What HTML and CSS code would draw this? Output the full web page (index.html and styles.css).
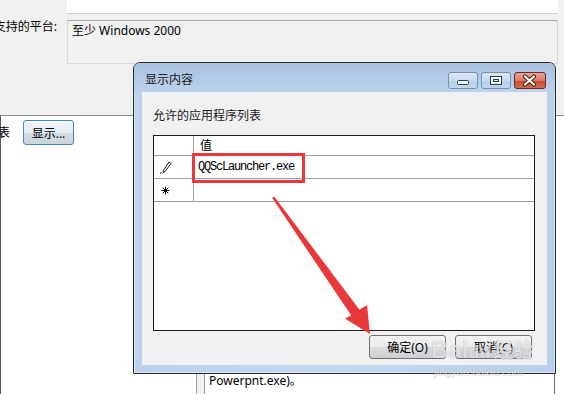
FILE: index.html
```html
<!DOCTYPE html>
<html lang="zh-CN">

<head>
    <meta charset="UTF-8">
    <meta name="viewport" content="width=device-width, initial-scale=1.0">
    <title>显示内容</title>
    <link rel="stylesheet" href="styles.css">
</head>

<body>
    <div class="props">
        <div class="field-top"></div>
        <div class="platform-row">
            <div class="prop-label">支持的平台:</div>
            <div class="platform-box">至少 Windows 2000</div>
        </div>
    </div>

    <div class="lower">
        <div class="pane-left">
            <div class="list-row">
                <span class="cut-label">表</span>
                <button class="btn-show">显示...</button>
            </div>
        </div>
        <div class="splitter"></div>
        <div class="pane-right">
            <p class="help-text">Powerpnt.exe)。</p>
        </div>
    </div>

    <div class="dialog">
        <div class="titlebar">
            <span class="title">显示内容</span>
            <div class="caption-btns">
                <span class="cap-btn">
                    <svg width="28" height="15" viewBox="0 0 28 15">
                        <rect x="8.5" y="7.5" width="11" height="4" rx="1" fill="#f4f8fc" stroke="#2a3d57"/>
                    </svg>
                </span>
                <span class="cap-btn">
                    <svg width="28" height="15" viewBox="0 0 28 15">
                        <rect x="8.5" y="3.5" width="11" height="8" fill="#f4f8fc" stroke="#2a3d57"/>
                        <rect x="11.5" y="6.5" width="5" height="2" fill="none" stroke="#2a3d57"/>
                    </svg>
                </span>
                <span class="cap-btn cap-close">
                    <svg width="30" height="15" viewBox="0 0 30 15">
                        <path d="M10 3.5 L19 11.5 M19 3.5 L10 11.5" stroke="#4a1c15" stroke-width="4.2" stroke-linecap="round"/>
                        <path d="M10 3.5 L19 11.5 M19 3.5 L10 11.5" stroke="#fff" stroke-width="2.2" stroke-linecap="round"/>
                    </svg>
                </span>
            </div>
        </div>

        <div class="client">
            <div class="list-title">允许的应用程序列表</div>
            <div class="grid">
                <div class="grid-row grid-head">
                    <div class="row-head"></div>
                    <div class="cell">值</div>
                </div>
                <div class="grid-row">
                    <div class="row-head">
                        <svg width="12" height="13" viewBox="0 0 12 13">
                            <path d="M9 1 L11 2.4 L5 10.6 L3.3 11.5 L3.4 9.4 Z" fill="none" stroke="#000" stroke-width="0.9"/>
                            <rect x="0" y="11.5" width="1" height="1" fill="#000"/>
                            <rect x="1.6" y="11.5" width="1" height="1" fill="#000"/>
                        </svg>
                    </div>
                    <div class="cell cell-mono">QQScLauncher.exe</div>
                </div>
                <div class="grid-row">
                    <div class="row-head">
                        <svg class="new-row" width="9" height="9" viewBox="0 0 9 9">
                            <path d="M4.5 0.5 V8.5 M0.5 4.5 H8.5 M1.7 1.7 L7.3 7.3 M7.3 1.7 L1.7 7.3" stroke="#000" stroke-width="1"/>
                        </svg>
                    </div>
                    <div class="cell"></div>
                </div>
            </div>
            <div class="dlg-buttons">
                <button class="btn">确定(O)</button>
                <button class="btn">取消(C)</button>
            </div>
        </div>
    </div>

    <!-- annotations on top of the screenshot -->
    <div class="highlight"></div>
    <svg class="arrow" width="564" height="394" viewBox="0 0 564 394">
        <polygon points="274.2,196.4 359.5,309.8 367,305 370,334 345,318.5 351.3,315.6 272.2,198" fill="#e8383a"/>
    </svg>
    <div class="watermark">
        <div class="wm-logo">Bai<span class="wm-du">du</span><span class="wm-cn">经验</span></div>
        <div class="wm-url">jingyan.baidu.com</div>
    </div>
</body>

</html>
```

FILE: styles.css
```css
body {
    margin: 0;
    width: 564px;
    height: 394px;
    overflow: hidden;
    position: relative;
    background: #f0f0f0;
    font-family: "Noto Sans", "Noto Sans CJK SC", sans-serif;
    font-size: 12px;
    color: #000;
}

/* policy property page behind the dialog */
.props {
    height: 115px;
}

.field-top {
    height: 13px;
    margin: 0 6px 0 67px;
    background: #fff;
    border-bottom: 1px solid #cfcfcf;
}

.platform-row {
    display: flex;
    margin: 6px 6px 0 0;
}

.prop-label {
    width: 67px;
    padding-right: 10px;
    box-sizing: border-box;
    display: flex;
    justify-content: flex-end;
    white-space: nowrap;
    line-height: 14px;
}

.platform-box {
    flex: 1;
    height: 44px;
    box-sizing: border-box;
    border: 1px solid #d9d9d9;
    border-top-color: #a9a9a9;
    padding: 3px 4px;
    line-height: 14px;
}

.lower {
    display: flex;
    height: 279px;
    box-sizing: border-box;
    background: #fff;
    border-top: 1px solid #8c8c8c;
    border-left: 1px solid #5a5a5a;
}

.pane-left {
    width: 195px;
}

.list-row {
    display: flex;
    align-items: center;
    padding-top: 4px;
}

.cut-label {
    margin-left: -3px;
    line-height: 14px;
}

.btn-show {
    margin-left: 13px;
    width: 51px;
    height: 25px;
    padding: 0;
    border: 1px solid #3f8ab8;
    border-radius: 3px;
    background: linear-gradient(#f2f5f8 0%, #e4eaef 50%, #d4dce3 51%, #cad3db 100%);
    font-family: inherit;
    font-size: 12px;
    color: #000;
}

.splitter {
    width: 7px;
    background: #f0f0f0;
    border-left: 1px solid #a0a0a0;
    border-right: 1px solid #a0a0a0;
}

.pane-right {
    flex: 1;
    margin-right: 9px;
    padding-left: 4px;
    border-right: 1px solid #6e6e6e;
}

.help-text {
    margin: 258px 0 0;
    line-height: 14px;
}

/* the "显示内容" window */
.dialog {
    position: absolute;
    left: 133px;
    top: 62px;
    width: 423px;
    height: 312px;
    box-sizing: border-box;
    display: flex;
    flex-direction: column;
    border: 1px solid #2b2b2b;
    border-radius: 7px 7px 0 0;
    background: linear-gradient(90deg, #bcd2ec, #c4d9f0 50%, #b9d0eb);
    box-shadow: inset 0 0 0 1px rgba(255, 255, 255, 0.45);
}

.titlebar {
    flex: none;
    height: 29px;
    box-sizing: border-box;
    padding: 9px 9px 0 11px;
    display: flex;
    justify-content: space-between;
    align-items: flex-start;
    border-radius: 6px 6px 0 0;
    background: linear-gradient(#a6c0de, #bdd3ec);
}

.title {
    line-height: 16px;
    color: #1a1a1a;
}

.caption-btns {
    display: flex;
    gap: 3px;
}

.cap-btn {
    display: flex;
    width: 30px;
    height: 17px;
    box-sizing: border-box;
    border: 1px solid #7890b0;
    border-radius: 3px;
    background: linear-gradient(#dce8f5 0%, #c8daee 50%, #b5cce7 51%, #c3d7ef 100%);
}

.cap-close {
    width: 32px;
    border-color: #6b2c25;
    background: linear-gradient(#e9a899 0%, #d97a66 50%, #c64a34 51%, #d46c55 100%);
}

.client {
    flex: 1;
    margin: 0 8px 8px;
    padding: 16px 12px 0 11px;
    box-sizing: border-box;
    background: #f0f0f0;
}

.list-title {
    line-height: 16px;
    color: #1a1a1a;
}

.grid {
    margin-top: 11px;
    height: 196px;
    box-sizing: border-box;
    border: 1px solid #1e1e1e;
    background: #fff;
}

.grid-row {
    display: flex;
    height: 23px;
    box-sizing: border-box;
    border-bottom: 1px solid #a0a0a0;
}

.grid-head {
    height: 20px;
}

.row-head {
    width: 40px;
    box-sizing: border-box;
    padding-left: 6px;
    display: flex;
    align-items: center;
    border-right: 1px solid #a0a0a0;
}

.new-row {
    margin-left: 1px;
}

.cell {
    flex: 1;
    padding-left: 6px;
    line-height: 22px;
}

.grid-head .cell {
    line-height: 19px;
}

.cell-mono {
    padding-left: 4px;
    font-family: "Liberation Mono", monospace;
    letter-spacing: -1.2px;
}

.dlg-buttons {
    display: flex;
    justify-content: flex-end;
    gap: 9px;
    margin-top: 4px;
    padding-right: 3px;
}

.btn {
    width: 77px;
    height: 24px;
    padding: 0;
    border: 1px solid #707070;
    border-radius: 3px;
    background: linear-gradient(#f2f2f2 0%, #ebebeb 50%, #dddddd 51%, #cfcfcf 100%);
    font-family: inherit;
    font-size: 12px;
    color: #000;
}

/* red annotation marks */
.highlight {
    position: absolute;
    left: 192px;
    top: 153px;
    width: 113px;
    height: 30px;
    box-sizing: border-box;
    border: 3px solid #e43b3b;
}

.arrow {
    position: absolute;
    left: 0;
    top: 0;
    pointer-events: none;
}

.watermark {
    position: absolute;
    left: 431px;
    top: 336px;
    color: rgba(255, 255, 255, 0.7);
    text-shadow: 0 0 1px rgba(0, 0, 0, 0.3);
    font-family: "Liberation Sans", sans-serif;
}

.wm-logo {
    font-size: 24px;
    font-weight: bold;
    line-height: 28px;
    white-space: nowrap;
}

.wm-du {
    font-size: 18px;
}

.wm-cn {
    margin-left: 3px;
    font-family: "Noto Sans CJK SC", sans-serif;
    font-size: 20px;
}

.wm-url {
    margin-left: 3px;
    font-size: 11px;
    line-height: 12px;
}
```
